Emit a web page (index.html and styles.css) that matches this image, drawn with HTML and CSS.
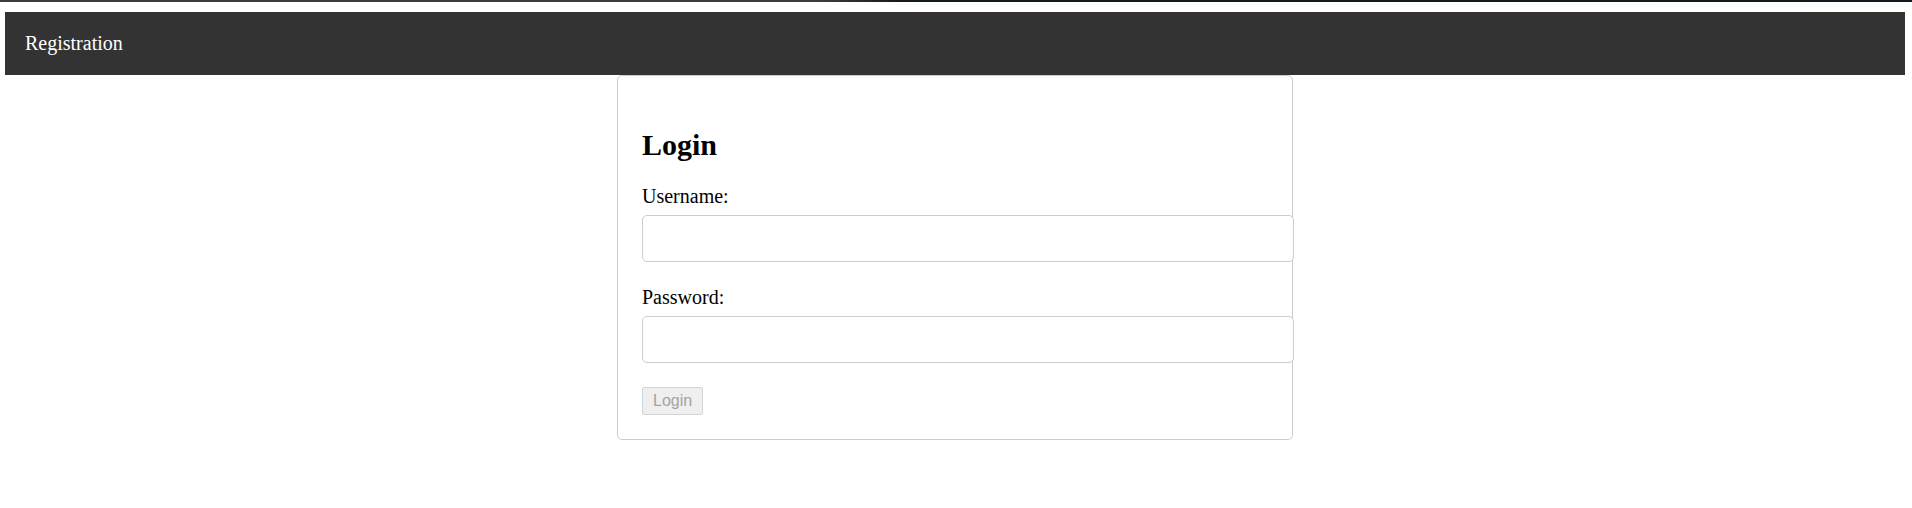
FILE: index.html
```html
<!DOCTYPE html>
<html lang="en">
<head>
<meta charset="utf-8">
<title>Login</title>
<link rel="stylesheet" href="styles.css">
</head>
<body>
<div class="chrome-edge"></div>
<div class="page">
  <header class="topbar">Registration</header>
  <main class="card">
    <h2 class="card-title">Login</h2>
    <form class="form">
      <label class="field-label" for="username">Username:</label>
      <input class="field-input" id="username" type="text">
      <label class="field-label" for="password">Password:</label>
      <input class="field-input" id="password" type="password">
      <button class="submit" type="submit" disabled>Login</button>
    </form>
  </main>
</div>
</body>
</html>
```

FILE: styles.css
```css
html, body {
  margin: 0;
  padding: 0;
  background: #fff;
}

body {
  font-family: "Liberation Serif", "Times New Roman", serif;
  font-size: 20px;
  color: #000;
}

.chrome-edge {
  height: 2px;
  background: linear-gradient(to right, #3a3d40 0%, #3a3d40 43%, #121a1e 47%, #0f1a20 100%);
}

.page {
  padding: 10px 7px 0 5px;
}

.topbar {
  background: #333;
  color: #fff;
  padding: 20px;
  line-height: 23px;
  font-size: 20px;
}

.card {
  display: block;
  width: 626px;
  margin: 0 auto;
  padding: 24px;
  border: 1px solid #ccc;
  border-radius: 5px;
}

.card-title {
  font-size: 30px;
  font-weight: bold;
  margin: 28px 0 23px;
  line-height: 34px;
}

.form {
  display: block;
}

.field-label {
  display: block;
  line-height: 23px;
  margin-bottom: 7px;
}

.field-input {
  display: block;
  width: 100%;
  height: 21px;
  padding: 12px;
  margin: 0 0 24px;
  border: 1px solid #ccc;
  border-radius: 5px;
  font-size: 16px;
  background: #fff;
}

.submit {
  display: block;
  font-family: "Liberation Sans", Arial, sans-serif;
  font-size: 16px;
  line-height: 20px;
  padding: 3px 10px;
  color: #a3a3a3;
  background: #efefef;
  border: 1px solid #d4d4d4;
  border-radius: 2px;
}
```
